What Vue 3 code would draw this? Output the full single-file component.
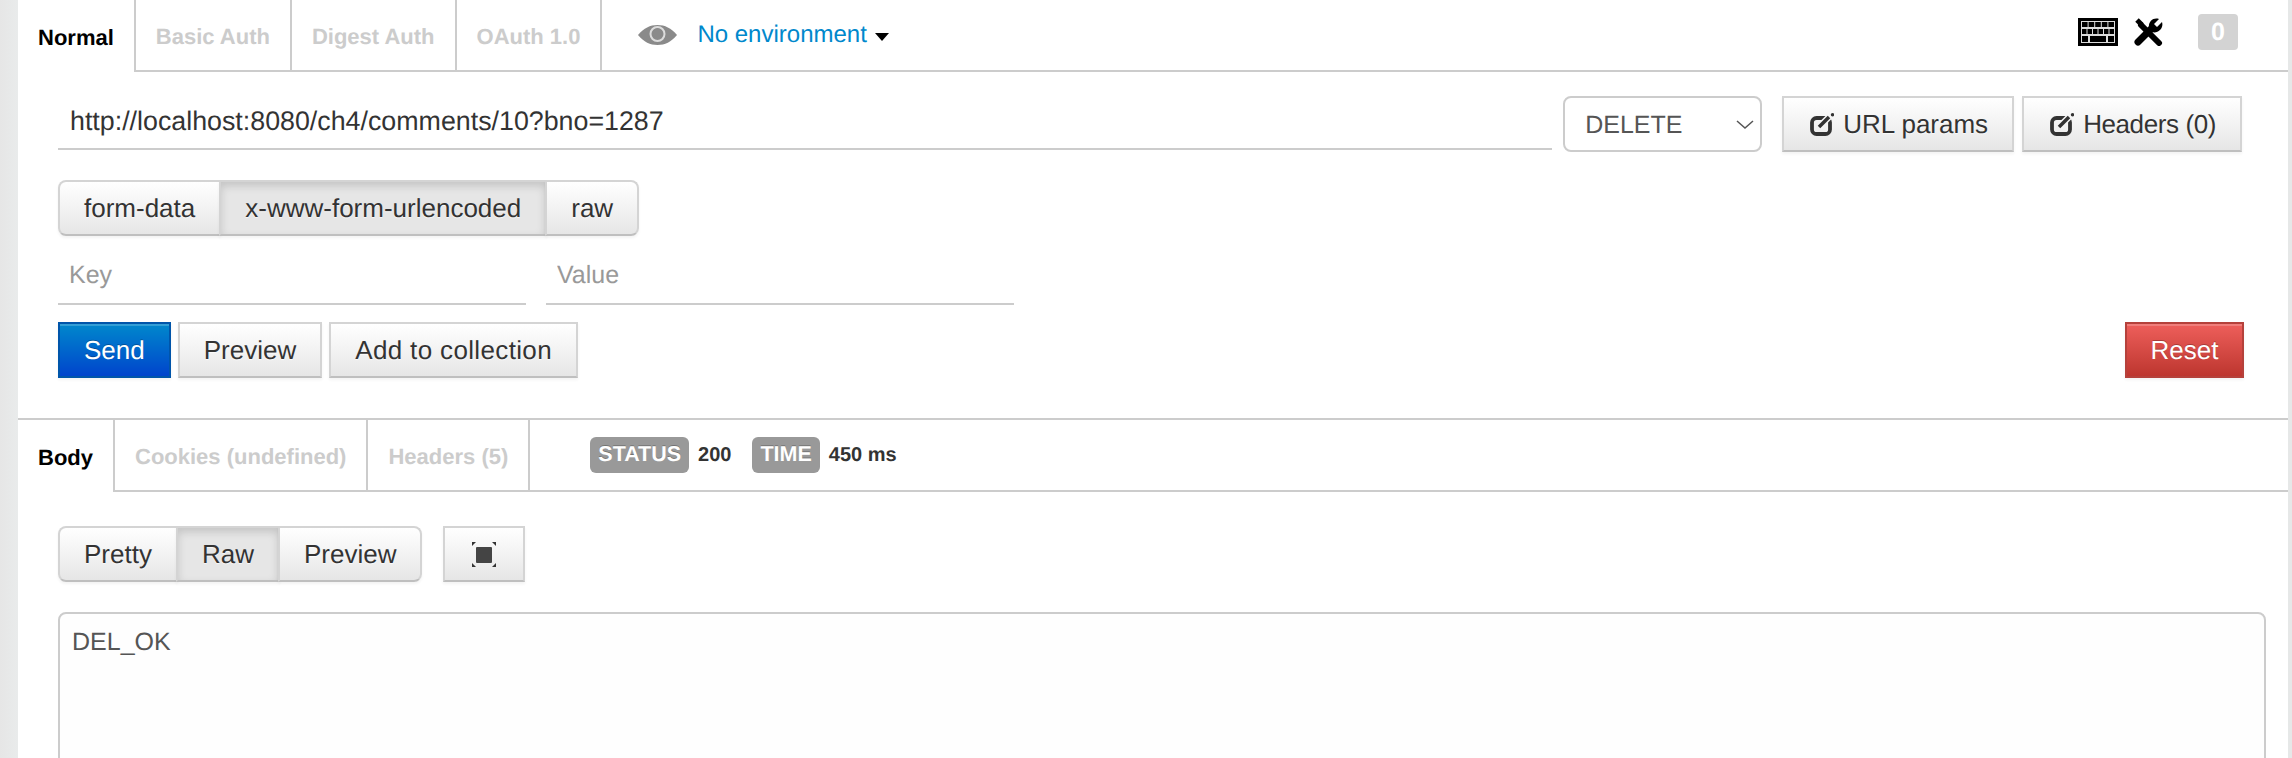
<template>
  <div class="page">
    <div class="strip strip-left"></div>
    <main class="panel">
      <nav class="tabs top-tabs">
        <a
          v-for="(tab, i) in requestTabs"
          :key="tab"
          class="tab"
          :class="{ active: i === 0 }"
        >{{ tab }}</a>
        <div class="env">
          <svg class="eye" viewBox="0 0 39 20" width="39" height="20">
            <path d="M0 10C6 3 12 0 19.500 0S33 3 39 10C33 17 27 20 19.500 20S6 17 0 10Z" fill="#8a8a8a" />
            <circle cx="19.500" cy="9" r="7" fill="none" stroke="#dcdcdc" stroke-width="2" />
            <circle cx="19.500" cy="8" r="4.500" fill="#8a8a8a" />
          </svg>
          <span class="env-name">No environment</span>
          <span class="caret"></span>
        </div>
        <div class="tools">
          <svg class="keyboard" viewBox="0 0 40 28" width="40" height="28">
            <rect width="40" height="28" fill="#000" />
            <rect x="3" y="3" width="34" height="22" fill="#ddd" />
            <g fill="#000">
              <rect v-for="k in 5" :key="'a' + k" :x="4 + (k - 1) * 6.600" y="4" width="5.600" height="5" />
              <rect v-for="k in 6" :key="'b' + k" :x="4 + (k - 1) * 5.500" y="11" width="4.500" height="5" />
              <rect x="4" y="18" width="6" height="6" />
              <rect x="12" y="18" width="16" height="6" />
              <rect x="30" y="18" width="6" height="6" />
            </g>
          </svg>
          <svg class="wrench" viewBox="0 0 29 28" width="29" height="28">
            <path d="M3 2L8 7" stroke="#000" stroke-width="5" fill="none" />
            <path d="M7 7L25 25" stroke="#000" stroke-width="6" stroke-linecap="round" fill="none" />
            <path d="M4 24L17 11" stroke="#000" stroke-width="7" stroke-linecap="round" fill="none" />
            <path d="M15 10C14 4 19 -1 25 1L20 6L23 9L28 4C30 10 24 16 18 14Z" fill="#000" />
          </svg>
          <span class="count">0</span>
        </div>
      </nav>

      <section class="request">
        <div class="url-row">
          <input class="field url" value="http://localhost:8080/ch4/comments/10?bno=1287" />
          <div class="method">
            <select>
              <option>DELETE</option>
            </select>
            <svg class="chevron" viewBox="0 0 18 9" width="18" height="9">
              <path d="M1 1L9 8L17 1" fill="none" stroke="#555" stroke-width="1.500" />
            </svg>
          </div>
          <div class="url-actions">
            <button v-for="b in urlButtons" :key="b" class="btn">
              <svg class="edit" viewBox="0 0 24 23" width="24" height="23">
                <rect x="2" y="5" width="18" height="16" rx="4.500" fill="none" stroke="#333" stroke-width="3.800" />
                <path d="M9 14L20 3" stroke="#f6f6f6" stroke-width="6.500" />
                <path d="M9 14L19 4" stroke="#333" stroke-width="3.500" />
                <circle cx="22.500" cy="1.800" r="1.700" fill="#333" />
              </svg>
              <span :class="{ tight: b !== urlButtons[0] }">{{ b }}</span>
            </button>
          </div>
        </div>

        <div class="group body-modes">
          <button
            v-for="m in bodyModes"
            :key="m"
            class="btn"
            :class="{ on: m === 'x-www-form-urlencoded' }"
          >{{ m }}</button>
        </div>

        <div class="kv-row">
          <input class="field kv" placeholder="Key" />
          <input class="field kv" placeholder="Value" />
        </div>

        <div class="action-row">
          <button class="btn send">Send</button>
          <button class="btn">Preview</button>
          <button class="btn collect">Add to collection</button>
          <button class="btn reset">Reset</button>
        </div>
      </section>

      <section class="response">
        <nav class="tabs body-tabs">
          <a
            v-for="(tab, i) in responseTabs"
            :key="tab"
            class="tab"
            :class="{ active: i === 0 }"
          >{{ tab }}</a>
          <div class="meta">
            <span class="label">STATUS</span>
            <span class="value">200</span>
            <span class="label">TIME</span>
            <span class="value">450 ms</span>
          </div>
        </nav>

        <div class="view-row">
          <div class="group">
            <button
              v-for="v in viewModes"
              :key="v"
              class="btn"
              :class="{ on: v === 'Raw' }"
            >{{ v }}</button>
          </div>
          <button class="btn full">
            <svg viewBox="0 0 24 25" width="24" height="25">
              <rect x="4" y="5" width="16" height="16" rx="1" fill="#444" />
              <path d="M0 4V0H4L0 4M20 0H24V4L20 0M24 21V25H20L24 21M4 25H0V21L4 25" fill="#333" />
            </svg>
          </button>
        </div>

        <textarea class="output" readonly>DEL_OK</textarea>
      </section>
    </main>
    <div class="strip strip-right"></div>
  </div>
</template>

<script setup>
const requestTabs = ['Normal', 'Basic Auth', 'Digest Auth', 'OAuth 1.0']
const responseTabs = ['Body', 'Cookies (undefined)', 'Headers (5)']
const urlButtons = ['URL params', 'Headers (0)']
const bodyModes = ['form-data', 'x-www-form-urlencoded', 'raw']
const viewModes = ['Pretty', 'Raw', 'Preview']
</script>

<style>
html,
body {
  margin: 0;
  background: #fff;
}
</style>

<style scoped>
.page {
  display: flex;
  height: 758px;
  overflow: hidden;
  font-family: 'Liberation Sans', Arial, sans-serif;
  color: #333;
  text-rendering: geometricPrecision;
}

.strip {
  flex: none;
  background: #e6e8e8;
}

.strip-left {
  width: 18px;
  background: linear-gradient(to right, #e6e6e6, #e9ebeb);
}

.strip-right {
  width: 4px;
}

.panel {
  flex: 1;
  min-width: 0;
  background: #fff;
}

/* tab rows */
.tabs {
  display: flex;
  box-sizing: border-box;
  border-bottom: 2px solid #ccc;
}

.top-tabs {
  height: 72px;
}

.body-tabs {
  height: 72px;
}

.tab {
  display: flex;
  align-items: center;
  box-sizing: border-box;
  height: 70px;
  padding: 4px 20px 0 20px;
  border-right: 2px solid #ccc;
  font-size: 22px;
  font-weight: bold;
  color: #ccc;
}

.tab.active {
  height: 72px;
  margin-bottom: -2px;
  background: #fff;
  color: #000;
}

.env {
  display: flex;
  align-items: center;
  margin-left: 36px;
}

.env-name {
  margin-left: 20px;
  font-size: 24px;
  color: #0088cc;
}

.caret {
  margin-left: 8px;
  margin-top: 4px;
  border-top: 8px solid #000;
  border-left: 7.500px solid transparent;
  border-right: 7.500px solid transparent;
}

.tools {
  display: flex;
  align-items: center;
  align-self: flex-start;
  height: 36px;
  margin: 14px 50px 0 auto;
}

.wrench {
  margin-left: 16px;
}

.count {
  margin-left: 35px;
  width: 40px;
  height: 36px;
  border-radius: 4px;
  background: #d3d3d3;
  color: #fff;
  font-size: 25px;
  font-weight: bold;
  line-height: 36px;
  text-align: center;
}

/* request area */
.request {
  box-sizing: border-box;
  height: 348px;
  padding: 24px 44px 0 40px;
  border-bottom: 2px solid #ccc;
}

.url-row {
  display: flex;
  align-items: flex-start;
  margin-right: 2px;
}

.field {
  box-sizing: border-box;
  border: 0;
  border-bottom: 2px solid #ccc;
  padding: 0 11px;
  outline: none;
  background: transparent;
  font-family: inherit;
  font-size: 25px;
  color: #333;
  text-rendering: geometricPrecision;
}

.field::placeholder {
  color: #999;
}

.url {
  flex: 1;
  min-width: 0;
  height: 54px;
  padding: 0 11px 2px 12px;
  font-size: 26.800px;
}

.method {
  position: relative;
  flex: none;
  margin-left: 11px;
}

.method select {
  display: block;
  box-sizing: border-box;
  width: 199px;
  height: 56px;
  padding: 2px 0 0 20px;
  border: 2px solid #ccc;
  border-radius: 8px;
  appearance: none;
  background: #fff;
  font-family: inherit;
  font-size: 25px;
  color: #555;
  text-rendering: geometricPrecision;
}

.chevron {
  position: absolute;
  top: 24px;
  right: 8px;
}

.url-actions {
  display: flex;
  flex: none;
  gap: 8px;
  margin-left: 20px;
}

.btn {
  display: inline-flex;
  align-items: center;
  box-sizing: border-box;
  height: 56px;
  padding: 0 24px;
  border: 2px solid #d4d4d4;
  border-bottom-color: #bfbfbf;
  background: linear-gradient(to bottom, #fff, #e6e6e6);
  box-shadow: 0 2px 3px rgba(0, 0, 0, 0.05);
  font-family: inherit;
  font-size: 26px;
  color: #333;
  text-shadow: 0 1px 1px rgba(255, 255, 255, 0.75);
  text-rendering: geometricPrecision;
}

.edit {
  margin: 0 9px 0 2px;
}

.tight {
  letter-spacing: -0.400px;
}

.collect {
  letter-spacing: 0.350px;
}

.group {
  display: inline-flex;
}

.group .btn + .btn {
  margin-left: -2px;
}

.group .btn:first-child {
  border-radius: 8px 0 0 8px;
}

.group .btn:last-child {
  border-radius: 0 8px 8px 0;
}

.group .btn.on {
  background: #e6e6e6;
  box-shadow: inset 0 4px 8px rgba(0, 0, 0, 0.15), 0 2px 3px rgba(0, 0, 0, 0.05);
}

.body-modes {
  display: flex;
  width: max-content;
  margin: 28px 0 0 0;
}

.kv-row {
  display: flex;
  gap: 20px;
  margin-top: 11px;
}

.kv {
  width: 468px;
  height: 58px;
}

.action-row {
  display: flex;
  gap: 7px;
  margin-top: 17px;
}

.send,
.reset {
  color: #fff;
  text-shadow: 0 -1px 0 rgba(0, 0, 0, 0.25);
  box-shadow: inset 0 2px 0 rgba(255, 255, 255, 0.2), 0 2px 3px rgba(0, 0, 0, 0.05);
}

.send {
  border-color: #0055aa;
  background: linear-gradient(to bottom, #0088cc, #0044cc);
}

.reset {
  margin-left: auto;
  padding: 0 23.500px;
  border-color: #b5413b;
  background: linear-gradient(to bottom, #ee5f5b, #bd362f);
}

/* response area */
.meta {
  display: flex;
  align-items: center;
  margin-left: 60px;
  font-weight: bold;
}

.label {
  height: 36px;
  padding: 0 8px;
  border-radius: 6px;
  background: #999;
  color: #fff;
  font-size: 21.500px;
  line-height: 34px;
  text-shadow: 0 -1px 0 rgba(0, 0, 0, 0.25);
}

.value {
  margin: 0 21px 0 9px;
  font-size: 20px;
}

.view-row {
  display: flex;
  gap: 21px;
  margin: 34px 0 0 40px;
}

.full {
  width: 82px;
  justify-content: center;
  padding: 0;
}

.output {
  display: block;
  box-sizing: border-box;
  width: 2208px;
  height: 300px;
  margin: 30px 0 0 40px;
  padding: 12px 12px;
  border: 2px solid #ccc;
  border-radius: 8px;
  outline: none;
  resize: none;
  background: #fefefe;
  font-family: inherit;
  font-size: 25px;
  line-height: 32px;
  color: #555;
  text-rendering: geometricPrecision;
}
</style>
